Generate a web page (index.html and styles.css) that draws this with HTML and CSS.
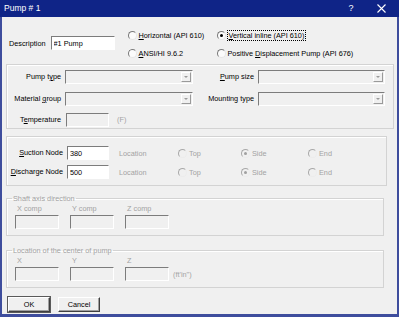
FILE: index.html
```html
<!DOCTYPE html>
<html lang="en">
<head>
    <meta charset="UTF-8">
    <title>Pump # 1</title>
    <link rel="stylesheet" href="styles.css">
</head>
<body>
    <div class="dialog">
        <div class="titlebar">
            <span class="title">Pump # 1</span>
            <span class="tb-btn tb-help">?</span>
            <span class="tb-btn tb-close">
                <svg width="9" height="9" viewBox="0 0 9 9"><path d="M0.5 0.5 L8.5 8.5 M8.5 0.5 L0.5 8.5" stroke="#fff" stroke-width="1.1" fill="none"/></svg>
            </span>
        </div>
        <div class="client">
            <div class="top">
                <label class="desc">Description <input class="field white" value="#1 Pump"></label>
                <div class="types">
                    <label class="radio"><span class="dot"></span><span><u>H</u>orizontal (API 610)</span></label>
                    <label class="radio"><span class="dot on"></span><span class="focus"><u>V</u>ertical inline (API 610)</span></label>
                    <label class="radio"><span class="dot"></span><span><u>A</u>NSI/HI 9.6.2</span></label>
                    <label class="radio"><span class="dot"></span><span>Positive <u>D</u>isplacement Pump (API 676)</span></label>
                </div>
            </div>

            <div class="group props">
                <span class="lbl">Pump t<u>y</u>pe</span>
                <div class="combo"><span class="drop"></span></div>
                <span class="lbl"><u>P</u>ump size</span>
                <div class="combo"><span class="drop"></span></div>

                <span class="lbl">Material <u>g</u>roup</span>
                <div class="combo"><span class="drop"></span></div>
                <span class="lbl">Mounting type</span>
                <div class="combo"><span class="drop"></span></div>

                <span class="lbl">T<u>e</u>mperature</span>
                <div class="temp">
                    <input class="field temp-in" disabled>
                    <span class="dim">(F)</span>
                </div>
            </div>

            <div class="group nodes">
                <span class="lbl"><u>S</u>uction Node</span>
                <input class="field white node-in" value="380">
                <span class="dim loc">Location</span>
                <label class="radio dim"><span class="dot"></span>Top</label>
                <label class="radio dim"><span class="dot on"></span>Side</label>
                <label class="radio dim"><span class="dot"></span>End</label>

                <span class="lbl"><u>D</u>ischarge Node</span>
                <input class="field white node-in" value="500">
                <span class="dim loc">Location</span>
                <label class="radio dim"><span class="dot"></span>Top</label>
                <label class="radio dim"><span class="dot on"></span>Side</label>
                <label class="radio dim"><span class="dot"></span>End</label>
            </div>

            <fieldset class="box">
                <legend>Shaft axis direction</legend>
                <div class="coords">
                    <span class="dim">X comp</span>
                    <span class="dim">Y comp</span>
                    <span class="dim">Z comp</span>
                    <input class="field" disabled>
                    <input class="field" disabled>
                    <input class="field" disabled>
                </div>
            </fieldset>

            <fieldset class="box box-last">
                <legend>Location of the center of pump</legend>
                <div class="coords">
                    <span class="dim">X</span>
                    <span class="dim">Y</span>
                    <span class="dim">Z</span>
                    <input class="field" disabled>
                    <input class="field" disabled>
                    <div class="with-unit">
                        <input class="field" disabled>
                        <span class="dim">(ft'in")</span>
                    </div>
                </div>
            </fieldset>

            <div class="buttons">
                <button class="btn default">OK</button>
                <button class="btn">Cancel</button>
            </div>
        </div>
    </div>
</body>
</html>
```

FILE: styles.css
```css
body {
    margin: 0;
    font-family: "Liberation Sans", Arial, sans-serif;
    font-size: 7.3px;
    line-height: 9px;
    color: #000;
    background: #f0f0f0;
}
.dialog {
    width: 399px;
    height: 317px;
    display: flex;
    flex-direction: column;
    background: #f0f0f0;
}

/* barra de titulo */
.titlebar {
    height: 17px;
    display: flex;
    align-items: center;
    background: #0f2487;
    color: #fff;
    padding: 0 3px 0 4px;
    flex-shrink: 0;
}
.title {
    font-size: 8.5px;
}
.tb-btn {
    width: 30px;
    height: 17px;
    display: flex;
    align-items: center;
    justify-content: center;
}
.tb-help {
    margin-left: auto;
    font-size: 9px;
}

.client {
    flex: 1;
    border: 2px solid #3e4d9d;
    border-top: 0;
    border-bottom-width: 3px;
}

/* controles comunes */
u {
    text-decoration: underline;
    text-underline-offset: 1px;
}
.field {
    box-sizing: border-box;
    height: 14px;
    margin: 0;
    padding: 0 2px;
    border: 1px solid;
    border-color: #7c7c7c #ffffff #ffffff #7c7c7c;
    background: #f0f0f0;
    font: inherit;
    color: #000;
    outline: none;
}
.field.white {
    background: #fff;
}
.dim {
    color: #a3a3a3;
}
.radio {
    display: flex;
    align-items: center;
    gap: 2px;
    white-space: nowrap;
}
.dot {
    box-sizing: border-box;
    width: 9px;
    height: 9px;
    border-radius: 50%;
    border: 1px solid;
    border-color: #7a7a7a #e6e6e6 #e6e6e6 #7a7a7a;
    background: #fbfbfb;
    display: flex;
    align-items: center;
    justify-content: center;
    flex-shrink: 0;
}
.dot.on::after {
    content: "";
    width: 3px;
    height: 3px;
    border-radius: 50%;
    background: #000;
}
.dim .dot {
    border-color: #a8a8a8 #ececec #ececec #a8a8a8;
    background: #f0f0f0;
}
.dim .dot.on::after {
    background: #a0a0a0;
}
.focus {
    outline: 1px dotted #000;
    padding: 0 1px;
}

/* cabecera */
.top {
    display: flex;
    height: 47px;
    padding-left: 7px;
}
.desc {
    display: flex;
    align-items: center;
    gap: 5px;
    height: 14px;
    margin-top: 19px;
}
.desc .field {
    width: 64px;
}
.types {
    display: grid;
    grid-template-columns: 89px auto;
    grid-auto-rows: 9px;
    row-gap: 9px;
    margin-top: 14px;
    margin-left: 13px;
}

/* grupos */
.group {
    box-sizing: border-box;
    border: 1px solid #d3d3d3;
    box-shadow: inset 1px 1px #fff;
}
.lbl {
    text-align: right;
    line-height: 14px;
    white-space: nowrap;
}
.props {
    margin: 0 3px 0 4px;
    height: 65px;
    padding-top: 5px;
    display: grid;
    grid-template-columns: 54px 128px 57px 127px;
    grid-template-rows: 22px 21px 14px;
    column-gap: 4px;
    align-items: start;
}
.combo {
    box-sizing: border-box;
    height: 14px;
    border: 1px solid;
    border-color: #7c7c7c #ffffff #ffffff #7c7c7c;
    display: flex;
    justify-content: flex-end;
    align-items: center;
    padding-right: 1px;
}
.drop {
    box-sizing: border-box;
    width: 10px;
    height: 10px;
    border: 1px solid;
    border-color: #ffffff #9a9a9a #9a9a9a #ffffff;
    display: flex;
    align-items: center;
    justify-content: center;
}
.drop::after {
    content: "";
    border-left: 2px solid transparent;
    border-right: 2px solid transparent;
    border-top: 2px solid #9a9a9a;
}
.temp {
    display: flex;
    align-items: center;
    gap: 8px;
    padding-left: 1px;
    line-height: 14px;
}
.temp-in {
    width: 43px;
}

.nodes {
    margin: 7px 10px 0 4px;
    height: 50px;
    padding-top: 9px;
    display: grid;
    grid-template-columns: 56px 46px 69px 63px 67px auto;
    grid-template-rows: 14px 14px;
    row-gap: 5px;
    align-items: center;
}
.node-in {
    width: 42px;
    margin-left: 4px;
}
.loc {
    padding-left: 10px;
}

/* cuadros con leyenda */
.box {
    margin: 8px 13px 0 4px;
    padding: 1px 0 6px 5px;
    border: 1px solid #d3d3d3;
    box-shadow: inset 1px 1px #fff;
    min-width: 0;
}
.box-last {
    margin-top: 10px;
}
.box legend {
    padding: 0 1px;
    color: #a3a3a3;
    line-height: 9px;
}
.coords {
    display: grid;
    grid-template-columns: 44px 44px auto;
    column-gap: 11px;
    row-gap: 2px;
    margin-left: 3px;
}
.coords > span {
    padding-left: 2px;
}
.coords .field {
    width: 44px;
}
.with-unit {
    display: flex;
    align-items: center;
    gap: 4px;
}

/* botones */
.buttons {
    display: flex;
    gap: 8px;
    padding-left: 6px;
    margin-top: 9px;
}
.btn {
    box-sizing: border-box;
    width: 42px;
    height: 15px;
    padding: 0;
    font: inherit;
    background: #f0f0f0;
    border: 1px solid;
    border-color: #ffffff #404040 #404040 #ffffff;
    box-shadow: inset -1px -1px #a0a0a0;
}
.btn.default {
    outline: 1px solid #5a5a5a;
    outline-offset: 0;
}
```
